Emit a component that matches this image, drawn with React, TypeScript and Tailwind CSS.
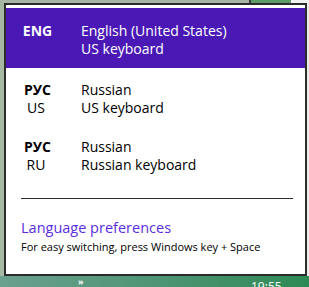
import React from "react";

interface LangRow {
  code: string;
  sub?: string;
  name: string;
  keyboard: string;
  active?: boolean;
}

const rows: LangRow[] = [
  { code: "ENG", name: "English (United States)", keyboard: "US keyboard", active: true },
  { code: "РУС", sub: "US", name: "Russian", keyboard: "US keyboard" },
  { code: "РУС", sub: "RU", name: "Russian", keyboard: "Russian keyboard" },
];

const font = { fontFamily: '"Open Sans", "Noto Sans", sans-serif' };

const App: React.FC = () => {
  return (
    <div
      className="relative flex h-[287px] w-[309px] flex-col overflow-hidden bg-[#a6b7a3]"
      style={font}
    >
      {/* strip above the flyout */}
      <div className="flex h-[3px] w-full">
        <div className="w-[249px] bg-[#a6b7a3]" />
        <div className="w-[2px] bg-[#3a3a3a]" />
        <div className="w-[40px] bg-[#5d9a66]" />
        <div className="flex-1 bg-[#f2f2f2]" />
      </div>

      <div className="flex">
        {/* flyout */}
        <div className="ml-[4px] h-[273px] w-[303px] border-2 border-[#2b2b2b] bg-white pt-[3px]">
          {rows.map((r, i) =>
            r.active ? (
              <div key={i} className="flex h-[60px] items-start bg-[#4a19b5] pt-[14px] text-[14px] leading-[18px] text-white">
                <div className="w-[63px] text-center font-bold">{r.code}</div>
                <div className="ml-[12px]">
                  <div>{r.name}</div>
                  <div>{r.keyboard}</div>
                </div>
              </div>
            ) : (
              <div key={i} className={`flex items-start text-[14px] leading-[18px] text-black ${i === 1 ? "mt-[13px]" : "mt-[21px]"}`}>
                <div className="w-[63px] text-center">
                  <div className="font-bold">{r.code}</div>
                  <div className="-ml-[3px]">{r.sub}</div>
                </div>
                <div className="ml-[12px]">
                  <div>{r.name}</div>
                  <div>{r.keyboard}</div>
                </div>
              </div>
            )
          )}

          <div className="ml-[15px] mt-[24px] h-px w-[272px] bg-[#2b2b2b]" />

          <div className="ml-[15px] mt-[19px] text-[14.5px] leading-[20px] text-[#5a2ee0]">
            Language preferences
          </div>
          <div className="ml-[15px] mt-[2px] text-[11px] leading-[14px] text-black">
            For easy switching, press Windows key + Space
          </div>
        </div>
        <div className="flex-1 bg-[#e9ece9]" />
      </div>

      {/* taskbar */}
      <div className="relative h-[11px] w-full bg-gradient-to-r from-[#6aa08f] via-[#4e9575] to-[#2d8a55]">
        <span className="absolute left-[78px] top-[1px] text-[9px] leading-[9px] font-bold text-white">»</span>
        <span className="absolute left-[251px] top-[5px] text-[12px] leading-[12px] text-white">19:55</span>
      </div>
    </div>
  );
};

export default App;
